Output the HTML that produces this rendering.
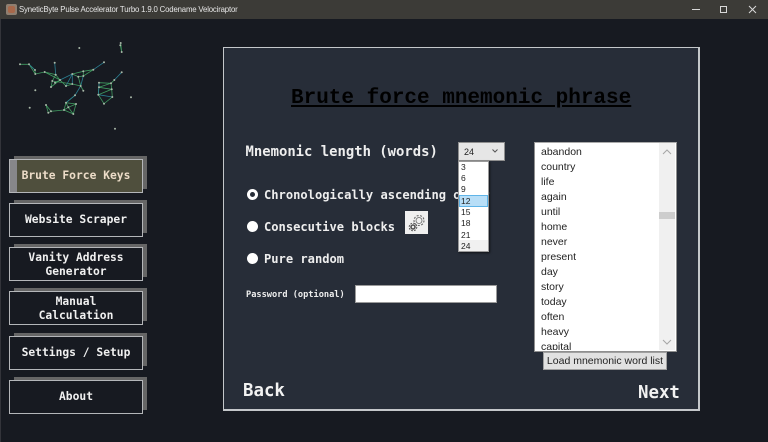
<!DOCTYPE html>
<html><head><meta charset="utf-8"><style>
html,body{margin:0;padding:0;width:768px;height:442px;overflow:hidden;background:#171a21}
body{position:relative;font-family:"DejaVu Sans Mono","Liberation Mono",monospace}
.a{position:absolute;white-space:nowrap}
.sh{position:absolute;background:#666;width:133px;height:33px}
.btn{position:absolute;left:9px;width:132px;height:32px;border:1px solid #b4b6b9;background:#171a21;color:#f0f0f0;font-weight:bold;font-size:11.3px;line-height:14px;text-align:center;display:flex;align-items:center;justify-content:center;box-sizing:content-box}
.two{padding-top:2px;height:30px}
.w{position:absolute;left:541px;font:10.5px/15px "Liberation Sans",sans-serif;color:#222}
.d{position:absolute;left:3px;font:8.5px/11px "Liberation Sans",sans-serif;color:#222}
.r{position:absolute;left:247px;width:11px;height:11px;border-radius:50%;background:#fff}
.o{position:absolute;left:264px;font-size:12.1px;font-weight:bold;color:#eee;white-space:nowrap;line-height:14px}
</style></head><body>
<div class="a" style="left:0;top:0;width:768px;height:19px;background:#3c3b37"></div>
<div class="a" style="left:0;top:19px;width:1px;height:423px;background:#33343a"></div>
<div class="a" style="left:6px;top:4px;width:11px;height:11px;border-radius:2px;background:#8f7f70"></div>
<div class="a" style="left:8px;top:6px;width:7px;height:7px;border-radius:2px;background:#a8684a"></div>
<div class="a" style="left:19px;top:4px;font:7.8px/12px 'Liberation Sans',sans-serif;letter-spacing:-.17px;color:#e6e6e6">SyneticByte Pulse Accelerator Turbo 1.9.0 Codename Velociraptor</div>
<svg class="a" style="left:690px;top:0" width="78" height="19" fill="none" stroke="#d8d8d8" stroke-width="1"><path d="M2 9.5h8"/><rect x="30.5" y="6.5" width="6" height="6"/><path d="M59 6l7 7M66 6l-7 7"/></svg>

<svg class="a" style="left:0;top:0" width="150" height="140" fill="none" stroke-width=".8">
<g stroke="#3f9a60"><path d="M20 64.3H29L35 70 35.3 74 44.7 72 55.700 74.700 52.300 81 51 87 60 80 55.700 74.700M44.700 72 60 80 66 86 72.300 84 80.700 86 83.300 90.700M52.300 81 72.300 84M72.300 74 78.300 76.700 83.300 76 83.300 71.300 72.300 74M83.300 71.300 93.300 69.700 83.300 76 78.300 76.700 80.700 86M29 64.300 35.300 74M55 82.700 60 80 51 87M75 95.300 66 102.700 64 110 73.300 114 76 104 66 102.700 68.300 107.300 73.300 114M64 110 68.300 107.300 76 104M46 105 48.300 112.700 51 111.300 46 105M51 111.300 64 110M99 82.700 111 83.300 114.300 80M99 82.700 98.300 94.700 104 103.700 112.300 97 111.700 89.300 111 83.300M99 87.300 111.700 89.300 98.300 94.700M99 87.300 111 83.300M120.700 43 121.700 52M120.300 45.300 121.700 52"/></g>
<g stroke="#2a7f92"><path d="M54.700 62.700 55.700 74.700M29 64.300 35 70M72.300 74V84M66 86 72.300 74M60 80 72.300 74M93.300 69.700 104 62.300M83.300 76 80.700 86M80.700 86 75 95.300 66 102.700M114.300 80 121.700 72.300M98.300 94.700 112.300 97M99 87.300 98.300 94.700M99 82.700 99 87.300"/></g>
<g fill="#a9b8a8" stroke="none">
<circle cx="20" cy="64.3" r="1"/><circle cx="29" cy="64.3" r="1"/><circle cx="35" cy="70" r="1"/><circle cx="35.3" cy="74" r="1"/><circle cx="44.7" cy="72" r="1"/><circle cx="55.7" cy="74.7" r="1"/><circle cx="54.7" cy="62.7" r="1"/><circle cx="52.3" cy="81" r="1"/><circle cx="51" cy="87" r="1"/><circle cx="60" cy="80" r="1"/><circle cx="55" cy="82.7" r="1"/><circle cx="66" cy="86" r="1"/><circle cx="72.3" cy="74" r="1"/><circle cx="72.3" cy="84" r="1"/><circle cx="78.3" cy="76.7" r="1"/><circle cx="83.3" cy="76" r="1"/><circle cx="83.3" cy="71.3" r="1"/><circle cx="93.3" cy="69.7" r="1"/><circle cx="104" cy="62.3" r="1"/><circle cx="80.7" cy="86" r="1"/><circle cx="83.3" cy="90.7" r="1"/><circle cx="75" cy="95.3" r="1"/><circle cx="76" cy="104" r="1"/><circle cx="66" cy="102.7" r="1"/><circle cx="64" cy="110" r="1"/><circle cx="73.3" cy="114" r="1"/><circle cx="68.3" cy="107.3" r="1"/><circle cx="46" cy="105" r="1"/><circle cx="48.3" cy="112.7" r="1"/><circle cx="51" cy="111.3" r="1"/><circle cx="99" cy="82.7" r="1"/><circle cx="98.3" cy="94.7" r="1"/><circle cx="104" cy="103.7" r="1"/><circle cx="112.3" cy="97" r="1"/><circle cx="111.7" cy="89.3" r="1"/><circle cx="111" cy="83.3" r="1"/><circle cx="114.3" cy="80" r="1"/><circle cx="121.7" cy="72.3" r="1"/><circle cx="99" cy="87.3" r="1"/><circle cx="120.7" cy="43" r="1"/><circle cx="120.3" cy="45.3" r="1"/><circle cx="121.7" cy="52" r="1"/><circle cx="79.3" cy="48" r="1"/><circle cx="35.3" cy="90.3" r="1"/><circle cx="29.7" cy="107.7" r="1"/><circle cx="131" cy="97.3" r="1"/><circle cx="115" cy="128.7" r="1"/></g></svg>

<div class="sh" style="left:14px;top:156px"></div>
<div class="sh" style="left:14px;top:200px"></div>
<div class="sh" style="left:14px;top:244px"></div>
<div class="sh" style="left:14px;top:288px"></div>
<div class="sh" style="left:14px;top:333px"></div>
<div class="sh" style="left:14px;top:377px"></div>
<div class="btn" style="top:159px;background:#4f4f3d;color:#ecdcc8;padding-bottom:1px;height:31px">Brute Force Keys</div>
<div class="a" style="left:10px;top:160px;width:7px;height:32px;background:#86868a"></div>
<div class="btn" style="top:203px">Website Scraper</div>
<div class="btn two" style="top:247px">Vanity Address<br>Generator</div>
<div class="btn two" style="top:291px">Manual<br>Calculation</div>
<div class="btn" style="top:336px">Settings / Setup</div>
<div class="btn" style="top:380px">About</div>

<div class="a" style="left:223px;top:47px;width:474px;height:361px;background:#272d38;border:1px solid #c4c7ca;border-right-width:2px;border-bottom-width:2px"></div>
<div class="a" style="left:291px;top:86px;font-size:21px;line-height:25px;color:#000;text-decoration:underline;font-family:'Liberation Mono',monospace;font-weight:bold">Brute force mnemonic phrase</div>
<div class="a" style="left:245.500px;top:144px;font-size:13.9px;line-height:16px;font-weight:bold;color:#eee">Mnemonic length (words)</div>

<div class="r" style="top:189px"></div><div class="a" style="left:250px;top:192px;width:5px;height:5px;border-radius:50%;background:#272d38"></div>
<div class="r" style="top:221px"></div>
<div class="r" style="top:253px"></div>
<div class="o" style="top:188px">Chronologically ascending order</div>
<div class="o" style="top:220px">Consecutive blocks</div>
<div class="o" style="top:252px">Pure random</div>

<div class="a" style="left:405px;top:211px;width:23px;height:23px;background:#f0f0f0"></div>
<svg class="a" style="left:405px;top:211px" width="23" height="23" fill="none" stroke="#666"><circle cx="14" cy="9.5" r="3" stroke-width=".8"/><circle cx="14" cy="9.5" r="5" stroke-width="1.100" stroke-dasharray="2 1.500"/><circle cx="8" cy="16" r="2" stroke-width="1.600" stroke="#555"/><circle cx="8" cy="16" r="3.800" stroke-width="1" stroke-dasharray="1.800 1.200" stroke="#555"/></svg>

<div class="a" style="left:246px;top:289px;font-size:8.65px;line-height:12px;font-weight:bold;color:#eee">Password (optional)</div>
<div class="a" style="left:355px;top:285px;width:140px;height:16px;background:#fff;border:1px solid #9a9a9a"></div>

<div class="a" style="left:458px;top:142px;width:45px;height:17px;background:#e6e6e6;border:1px solid #8f8f8f;font:9px/18px 'Liberation Sans',sans-serif;color:#222;text-indent:5px">24</div>
<svg class="a" style="left:490px;top:147px" width="10" height="8" fill="none" stroke="#555"><path d="M2.5 2.5 5 5 7.500 2.500"/></svg>
<div class="a" style="left:458px;top:161px;width:31px;height:91px;background:#fff;box-shadow:1px 1px 2px rgba(0,0,0,.6);outline:1px solid #999;outline-offset:-1px">
<div class="a" style="left:1px;top:34px;height:10px;background:#b8def7;border:1px solid #5fb4e8;box-sizing:content-box;width:27px"></div>
<div class="a" style="left:1px;top:79px;width:29px;height:11px;background:#f0f0f0"></div>
<div class="d" style="top:0.500px">3</div><div class="d" style="top:11.500px">6</div><div class="d" style="top:22.500px">9</div><div class="d" style="top:34.500px">12</div><div class="d" style="top:45.500px">15</div><div class="d" style="top:56.500px">18</div><div class="d" style="top:68.500px">21</div><div class="d" style="top:79.500px">24</div>
</div>

<div class="a" style="left:534px;top:142px;width:141px;height:208px;background:#fff;border:1px solid #8f8f8f;border-top-color:#aaa;overflow:hidden"></div>
<div class="a" style="left:659px;top:143px;width:16px;height:207px;background:#f0f0f0"></div>
<div class="a" style="left:659px;top:212px;width:16px;height:7px;background:#cdcdcd"></div>
<svg class="a" style="left:659px;top:143px" width="16" height="207" fill="none" stroke="#a6a6a6"><path d="M4 11 8 7 12 11M4 197 8 201 12 197"/></svg>
<div class="a" style="left:535px;top:143px;width:124px;height:207px;overflow:hidden">
<div class="w" style="left:6px;top:2px">abandon</div><div class="w" style="left:6px;top:17px">country</div><div class="w" style="left:6px;top:32px">life</div><div class="w" style="left:6px;top:47px">again</div><div class="w" style="left:6px;top:62px">until</div><div class="w" style="left:6px;top:77px">home</div><div class="w" style="left:6px;top:92px">never</div><div class="w" style="left:6px;top:107px">present</div><div class="w" style="left:6px;top:122px">day</div><div class="w" style="left:6px;top:137px">story</div><div class="w" style="left:6px;top:152px">today</div><div class="w" style="left:6px;top:167px">often</div><div class="w" style="left:6px;top:182px">heavy</div><div class="w" style="left:6px;top:197px">capital</div>
</div>
<div class="a" style="left:543px;top:352px;width:122px;height:16px;background:#e1e1e1;border:1px solid #a0a0a0;font:10.5px/16px 'Liberation Sans',sans-serif;color:#222;text-align:center">Load mnemonic word list</div>

<div class="a" style="left:243px;top:380px;font-size:17.4px;line-height:22px;font-weight:bold;color:#f2f2f2">Back</div>
<div class="a" style="left:638px;top:382px;font-size:17.4px;line-height:22px;font-weight:bold;color:#f2f2f2">Next</div>
</body></html>
